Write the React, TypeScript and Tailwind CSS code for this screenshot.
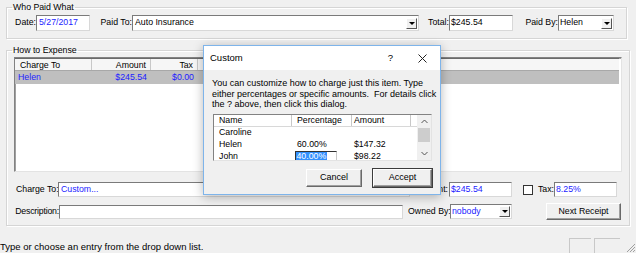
import { ReactNode } from 'react'

const MAIN = "font-['Liberation_Sans',Arial,sans-serif]"
const BLUE = 'text-[#1c1cff]'

function Sunken({ className = '', children }: { className?: string; children?: ReactNode }) {
  return (
    <div
      className={`bg-white border border-t-[#7a7a7a] border-l-[#7a7a7a] border-r-[#d8d8d8] border-b-[#d8d8d8] flex items-center overflow-hidden whitespace-nowrap ${className}`}
    >
      {children}
    </div>
  )
}

function DropButton() {
  return (
    <div className="w-[11px] h-[11px] mr-[1px] ml-auto shrink-0 bg-[#f0f0f0] border border-t-white border-l-white border-r-[#555] border-b-[#555] flex items-center justify-center">
      <div className="w-0 h-0 border-l-[3px] border-r-[3px] border-t-[3px] border-l-transparent border-r-transparent border-t-black" />
    </div>
  )
}

function Label({ className = '', children }: { className?: string; children: ReactNode }) {
  return <div className={`shrink-0 whitespace-nowrap text-right ${className}`}>{children}</div>
}

function Button({ className = '', isDefault = false, children }: { className?: string; isDefault?: boolean; children: ReactNode }) {
  return (
    <div
      className={`flex items-center justify-center bg-[#f0f0f0] border border-t-white border-l-white border-r-[#696969] border-b-[#696969] shadow-[inset_-1px_-1px_0_#a0a0a0] ${
        isDefault ? 'outline outline-1 outline-[#3c3c3c]' : ''
      } ${className}`}
    >
      {children}
    </div>
  )
}

function CustomDialog() {
  return (
    <div className="absolute left-[203px] top-[45px] w-[238px] h-[150px] border border-[#7eb4ea] bg-[#f0f0f0] shadow-[0_2px_10px_rgba(0,0,0,0.28)] flex flex-col">
      {/* title bar */}
      <div className="h-[24px] bg-white flex items-center pl-[6px] text-[9.5px] text-black">
        <span>Custom</span>
        <span className="ml-auto mr-[25px] text-[9.5px]">?</span>
        <svg width="9" height="9" viewBox="0 0 9 9" className="mr-[13px]">
          <path d="M0.5 0.5L8.5 8.5M8.5 0.5L0.5 8.5" stroke="#222" strokeWidth="1" />
        </svg>
      </div>

      <div className="pl-[8px] pt-[8px] text-[9px] leading-[10.5px] text-black whitespace-nowrap">
        You can customize how to charge just this item. Type
        <br />
        either percentages or specific amounts.{'\u00a0\u00a0'}For details click
        <br />
        the ? above, then click this dialog.
      </div>

      {/* split list */}
      <div className="ml-[9px] mt-[4px] w-[219px] h-[47px] bg-white border border-t-[#828282] border-l-[#828282] border-r-[#e3e3e3] border-b-[#e3e3e3] flex overflow-hidden text-[8.75px]">
        <div className="flex-1 flex flex-col">
          <div className="h-[12px] flex shrink-0 border-b border-[#d8d8d8] bg-white">
            <div className="w-[78px] pl-[5px] border-r border-[#c8c8c8] leading-[11px]">Name</div>
            <div className="w-[60px] pl-[5px] border-r border-[#c8c8c8] leading-[11px]">Percentage</div>
            <div className="w-[59px] pl-[2px] border-r border-[#c8c8c8] leading-[11px]">Amount</div>
            <div className="flex-1" />
          </div>
          <div className="h-[12px] flex items-center pl-[5px]">Caroline</div>
          <div className="h-[12px] flex items-center">
            <div className="w-[78px] pl-[5px]">Helen</div>
            <div className="w-[60px] pl-[5px]">60.00%</div>
            <div className="pl-[2px]">$147.32</div>
          </div>
          <div className="h-[12px] flex items-center">
            <div className="w-[78px] pl-[5px]">John</div>
            <div className="w-[60px] pl-[3px]">
              <div className="w-[42px] h-[11px] bg-white border border-t-[#333] border-l-[#333] border-r-[#c8c8c8] border-b-[#c8c8c8] flex items-center">
                <span className="bg-[#3390ff] text-white leading-[9px] px-[0.5px]">40.00%</span>
              </div>
            </div>
            <div className="pl-[2px]">$98.22</div>
          </div>
        </div>
        <div className="w-[14px] bg-[#f0f0f0] flex flex-col items-center">
          <svg width="7" height="5" viewBox="0 0 7 5" className="mt-[4px]">
            <path d="M0.5 4L3.5 1L6.5 4" fill="none" stroke="#555" strokeWidth="1" />
          </svg>
          <div className="w-[12px] h-[14px] mt-[4px] bg-[#cdcdcd]" />
          <svg width="7" height="5" viewBox="0 0 7 5" className="mt-auto mb-[4px]">
            <path d="M0.5 1L3.5 4L6.5 1" fill="none" stroke="#555" strokeWidth="1" />
          </svg>
        </div>
      </div>

      <div className="flex mt-[8px] ml-[102px] gap-[11px] text-[9px]">
        <Button className="w-[56px] h-[18px]">Cancel</Button>
        <Button className="w-[59px] h-[18px]" isDefault>
          Accept
        </Button>
      </div>
    </div>
  )
}

export default function App() {
  return (
    <div className={`relative w-[636px] h-[253px] overflow-hidden bg-[#f0f0f0] text-black ${MAIN}`}>
      <div className="pt-[2px] text-[8.75px]">
        {/* Who Paid What */}
        <fieldset className="ml-[6px] w-[621px] h-[37px] border border-[#d5d5d5] shadow-[inset_1px_1px_0_#fff,1px_1px_0_#fff] px-[7px]">
          <legend className="ml-[-2px] px-[1px] leading-[10px] text-[8.75px]">Who Paid What</legend>
          <div className="flex items-center h-[16px] mt-[3px]">
            <Label className="w-[22px] text-left">Date:</Label>
            <Sunken className={`w-[54px] h-[16px] pl-[2px] ${BLUE}`}>5/27/2017</Sunken>
            <Label className="ml-[9px] w-[33px] text-left">Paid To:</Label>
            <Sunken className="w-[287px] h-[16px] pl-[2px]">
              Auto Insurance
              <DropButton />
            </Sunken>
            <Label className="ml-[5px] w-[25px] text-left">Total:</Label>
            <Sunken className="w-[64px] h-[16px] pl-[1px]">$245.54</Sunken>
            <Label className="ml-[10px] w-[35px] text-left">Paid By:</Label>
            <Sunken className="w-[56px] h-[16px] pl-[1px]">
              Helen
              <DropButton />
            </Sunken>
          </div>
        </fieldset>

        {/* How to Expense */}
        <fieldset className="ml-[6px] mt-[6px] w-[621px] h-[181px] border border-[#d5d5d5] shadow-[inset_1px_1px_0_#fff,1px_1px_0_#fff] px-[7px]">
          <legend className="ml-[-2px] px-[1px] leading-[10px] text-[8.75px]">How to Expense</legend>

          <div className="mt-[2px] w-[608px] h-[115px] bg-white border border-t-[#828282] border-l-[#828282] border-r-[#e3e3e3] border-b-[#e3e3e3] shadow-[inset_1px_1px_0_#a0a0a0]">
            <div className="flex h-[13px] bg-[#f6f6f6] border-b border-[#a8a8a8] border-t border-t-[#6a6a6a] mr-[2px]">
              <div className="w-[77px] pl-[5px] border-r border-[#c8c8c8] leading-[12px]">Charge To</div>
              <div className="w-[59px] pr-[4px] text-right border-r border-[#c8c8c8] leading-[12px]">Amount</div>
              <div className="w-[47px] pr-[4px] text-right border-r border-[#c8c8c8] leading-[12px]">Tax</div>
              <div className="flex-1" />
            </div>
            <div className={`flex h-[13px] bg-[#bfbfbf] items-center mr-[2px] ${BLUE}`}>
              <div className="w-[77px] pl-[3px]">Helen</div>
              <div className="w-[59px] pr-[4px] text-right">$245.54</div>
              <div className="w-[47px] pr-[4px] text-right">$0.00</div>
            </div>
          </div>

          <div className="flex items-center h-[15px] mt-[10px]">
            <Label className="w-[44px] pl-[2px] text-left">Charge To:</Label>
            <Sunken className={`w-[352px] h-[15px] pl-[2px] ${BLUE}`}>Custom...</Sunken>
            <Label className="w-[39px] text-right pr-[1px]">Amount:</Label>
            <Sunken className={`w-[63px] h-[15px] pl-[1px] ${BLUE}`}>$245.54</Sunken>
            <div className="ml-[11px] w-[10px] h-[10px] bg-white border border-[#333] shrink-0" />
            <Label className="ml-[4px] w-[17px] text-left">Tax:</Label>
            <Sunken className={`w-[63px] h-[15px] pl-[1px] ${BLUE}`}>8.25%</Sunken>
          </div>

          <div className="flex items-center h-[17px] mt-[6px]">
            <Label className="w-[45px] text-left tracking-[-0.2px]">Description:</Label>
            <Sunken className="w-[344px] h-[14px]" />
            <Label className="ml-[5px] w-[42px] text-left">Owned By:</Label>
            <Sunken className={`w-[62px] h-[15px] pl-[1px] ${BLUE}`}>
              nobody
              <DropButton />
            </Sunken>
            <Button className="ml-[34px] w-[75px] h-[17px]">Next Receipt</Button>
          </div>
        </fieldset>
      </div>

      {/* status bar */}
      <div className="mt-[5px] h-[22px] flex items-start text-[9.5px]">
        <div className="pt-[11px] leading-[10px] whitespace-nowrap">Type or choose an entry from the drop down list.</div>
        <div className="ml-auto mt-[7px] flex gap-[3px]">
          <div className="w-[22px] h-[16px] border-t border-l border-[#c8c8c8]" />
          <div className="w-[26px] h-[16px] border-t border-l border-[#c8c8c8]" />
        </div>
        <svg width="12" height="12" viewBox="0 0 12 12" className="self-end ml-[4px]">
          <path d="M11 3L3 11M11 6L6 11M11 9L9 11" stroke="#a0a0a0" strokeWidth="1" />
        </svg>
      </div>

      <CustomDialog />
    </div>
  )
}
